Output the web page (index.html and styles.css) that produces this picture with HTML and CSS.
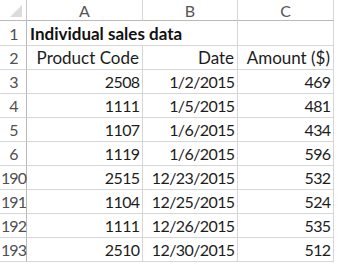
FILE: index.html
```html
<!DOCTYPE html>
<html>
<head>
<meta charset="utf-8">
<link rel="stylesheet" href="styles.css">
</head>
<body>
<div class="sheet">
  <div class="corner"><span class="tri"></span></div>
  <div class="colhead">A</div>
  <div class="colhead">B</div>
  <div class="colhead">C</div>

  <div class="rowhead">1</div>
  <div class="cell title">Individual sales data</div>
  <div class="cell"></div>

  <div class="rowhead">2</div>
  <div class="cell text">Product Code</div>
  <div class="cell text">Date</div>
  <div class="cell text">Amount ($)</div>

  <div class="rowhead">3</div>
  <div class="cell num">2508</div>
  <div class="cell num">1/2/2015</div>
  <div class="cell num">469</div>

  <div class="rowhead">4</div>
  <div class="cell num">1111</div>
  <div class="cell num">1/5/2015</div>
  <div class="cell num">481</div>

  <div class="rowhead">5</div>
  <div class="cell num">1107</div>
  <div class="cell num">1/6/2015</div>
  <div class="cell num">434</div>

  <div class="rowhead">6</div>
  <div class="cell num">1119</div>
  <div class="cell num">1/6/2015</div>
  <div class="cell num">596</div>

  <div class="rowhead">190</div>
  <div class="cell num">2515</div>
  <div class="cell num">12/23/2015</div>
  <div class="cell num">532</div>

  <div class="rowhead">191</div>
  <div class="cell num">1104</div>
  <div class="cell num">12/25/2015</div>
  <div class="cell num">524</div>

  <div class="rowhead">192</div>
  <div class="cell num">1111</div>
  <div class="cell num">12/26/2015</div>
  <div class="cell num">535</div>

  <div class="rowhead">193</div>
  <div class="cell num">2510</div>
  <div class="cell num">12/30/2015</div>
  <div class="cell num">512</div>
</div>
</body>
</html>
```

FILE: styles.css
```css
html, body {
  margin: 0;
  padding: 0;
  background: #ffffff;
}

.sheet {
  display: grid;
  grid-template-columns: 27px 116px 95px 96px;
  grid-template-rows: 21px 25px repeat(9, 24px);
  font-family: Lato, "Liberation Sans", sans-serif;
  font-size: 17px;
  color: #1c1c1c;
}

.corner,
.colhead,
.rowhead,
.cell {
  box-sizing: border-box;
  border-right: 1px solid #d6d6d6;
  border-bottom: 1px solid #d6d6d6;
  display: flex;
  align-items: center;
  white-space: nowrap;
}

.corner {
  position: relative;
  border-bottom-color: #b9b9b9;
  border-right-color: #c8c8c8;
}

.tri {
  position: absolute;
  right: 4px;
  bottom: 3px;
  width: 0;
  height: 0;
  border-left: 12px solid transparent;
  border-bottom: 12px solid #dcdcdc;
}

.colhead {
  justify-content: center;
  color: #555555;
  border-bottom-color: #b9b9b9;
  font-size: 16px;
}

.rowhead {
  justify-content: center;
  color: #505050;
  border-right-color: #b9b9b9;
  font-size: 16px;
  letter-spacing: -1px;
  padding-left: 1px;
}

.cell {
  padding: 0 3px;
}

.text {
  justify-content: flex-end;
}

.num {
  justify-content: flex-end;
  font-size: 16px;
  letter-spacing: -0.6px;
  padding-right: 2.5px;
}

.title {
  grid-column: span 2;
  font-weight: bold;
  color: #111111;
}
```
